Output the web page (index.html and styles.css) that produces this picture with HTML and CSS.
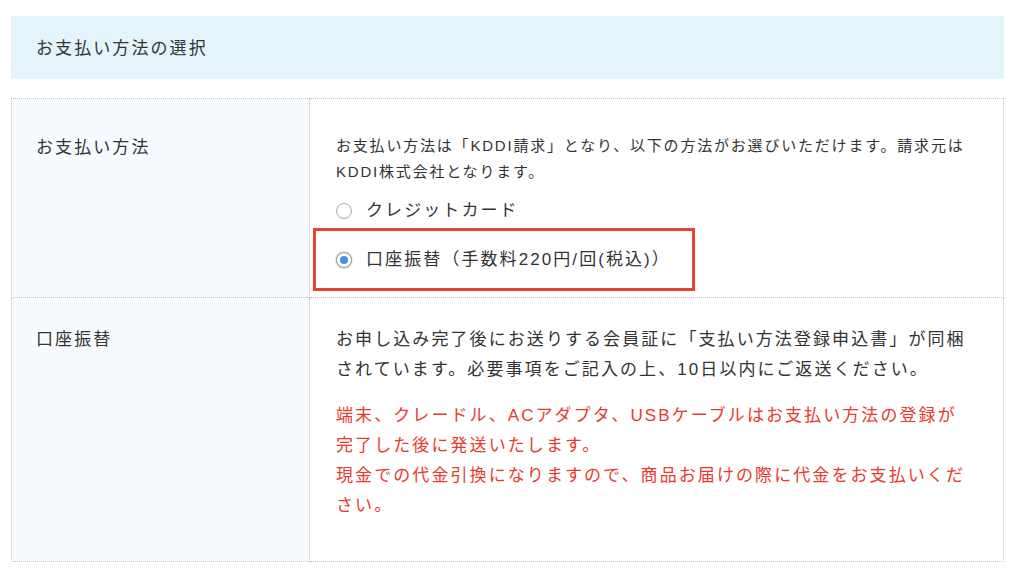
FILE: index.html
```html
<!DOCTYPE html>
<html lang="ja">
<head>
    <meta charset="UTF-8">
    <meta name="viewport" content="width=device-width, initial-scale=1.0">
    <title>お支払い方法の選択</title>
    <link rel="stylesheet" href="styles.css">
</head>
<body>
    <div class="page">
        <h2 class="section-title">お支払い方法の選択</h2>

        <table class="form-table">
            <tr class="row-method">
                <th>お支払い方法</th>
                <td>
                    <p class="intro">お支払い方法は「KDDI請求」となり、以下の方法がお選びいただけます。請求元はKDDI株式会社となります。</p>
                    <div class="options">
                        <label class="option">
                            <span class="radio"></span>
                            クレジットカード
                        </label>
                        <label class="option option-highlight">
                            <span class="radio checked"></span>
                            口座振替（手数料220円/回(税込)）
                        </label>
                    </div>
                </td>
            </tr>
            <tr class="row-transfer">
                <th>口座振替</th>
                <td>
                    <p class="note">お申し込み完了後にお送りする会員証に「支払い方法登録申込書」が同梱されています。必要事項をご記入の上、10日以内にご返送ください。</p>
                    <p class="note note-red">端末、クレードル、ACアダプタ、USBケーブルはお支払い方法の登録が完了した後に発送いたします。<br>現金での代金引換になりますので、商品お届けの際に代金をお支払いください。</p>
                </td>
            </tr>
        </table>
    </div>
</body>
</html>
```

FILE: styles.css
```css
body {
    margin: 0;
    padding: 0;
    background-color: #fff;
    color: #333;
    font-family: "Liberation Sans", "Noto Sans CJK JP", sans-serif;
    letter-spacing: 0.13em;
}

.page {
    width: 993px;
    margin-left: 11px;
    padding-top: 16px;
}

.section-title {
    margin: 0;
    height: 63px;
    line-height: 65px;
    padding-left: 25px;
    background-color: #e4f4fa;
    font-size: 17px;
    font-weight: normal;
}

.form-table {
    width: 100%;
    margin-top: 19px;
    border-collapse: collapse;
    border: 1px dotted #c4c4c4;
}

.form-table th,
.form-table td {
    border: 1px dotted #c4c4c4;
    vertical-align: top;
    text-align: left;
}

.form-table th {
    width: 273px;
    padding: 0 0 0 24px;
    background-color: #f7fbff;
    font-size: 17px;
    font-weight: normal;
    line-height: 30px;
}

.form-table td {
    padding: 0 31px 0 26px;
    font-size: 17px;
    line-height: 30px;
}

.row-method th {
    padding-top: 34px;
}

.row-method td {
    padding-top: 33px;
    padding-bottom: 6px;
}

.row-transfer th {
    padding-top: 27px;
}

.row-transfer td {
    padding-top: 27px;
    padding-bottom: 40px;
}

.intro {
    margin: 0;
    padding-top: 1px;
    font-size: 15px;
    line-height: 26px;
    letter-spacing: 0.12em;
}

.options {
    margin-top: 10px;
}

.option {
    display: flex;
    align-items: center;
    height: 30px;
    padding-top: 1px;
}

.radio {
    width: 14px;
    height: 14px;
    margin-right: 14px;
    border: 1px solid #a9a9a9;
    border-radius: 50%;
    background-color: #fff;
    box-sizing: content-box;
    flex-shrink: 0;
    position: relative;
}

.radio.checked {
    border-color: #9a9a9a;
    box-shadow: 0 0 2px rgba(0, 0, 0, 0.35);
}

.radio.checked::after {
    content: "";
    position: absolute;
    top: 3px;
    left: 3px;
    width: 8px;
    height: 8px;
    border-radius: 50%;
    background-color: #4a90e2;
}

.option-highlight {
    width: fit-content;
    height: 29px;
    margin-top: 2px;
    margin-left: -23px;
    padding: 14px 21px 14px 20px;
    border: 3px solid #e8412c;
}

.note {
    margin: 0;
}

.note + .note {
    margin-top: 16px;
}

.note-red {
    color: #e83a2e;
}
```
